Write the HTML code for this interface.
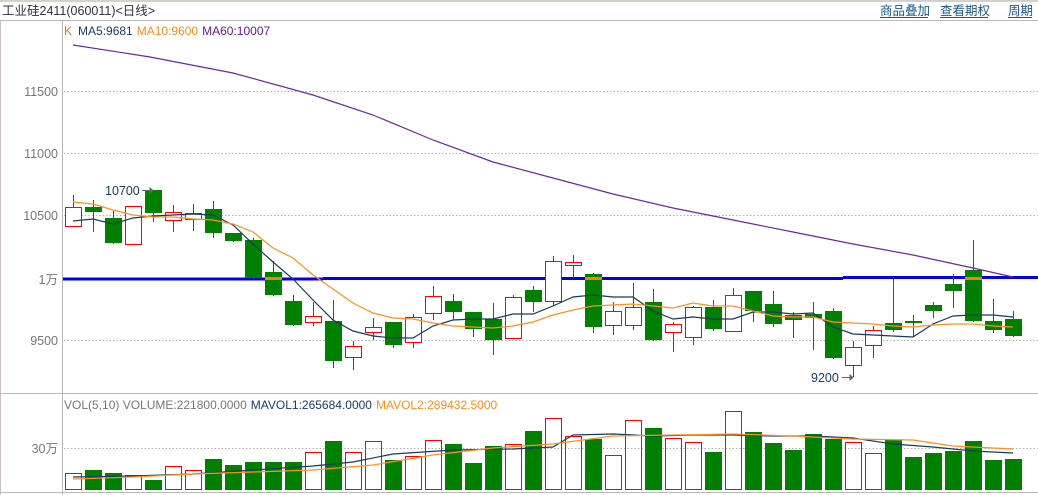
<!DOCTYPE html>
<html><head><meta charset="utf-8"><style>
html,body{margin:0;padding:0;background:#fff;width:1038px;height:495px;overflow:hidden}
svg{display:block}
text{font-family:"Liberation Sans","Noto Sans CJK SC",sans-serif}
rect,line{shape-rendering:crispEdges}
</style></head><body>
<svg id="s" width="1038" height="495" viewBox="0 0 1038 495" xmlns="http://www.w3.org/2000/svg">
<rect x="0" y="0" width="1038" height="495" fill="#fff"/>
<rect x="0" y="0" width="1038" height="2" fill="#d4d0cc"/>
<line x1="0" y1="20.5" x2="1038" y2="20.5" stroke="#b8b8b8"/>
<line x1="0.5" y1="20" x2="0.5" y2="495" stroke="#c8c0c0"/>
<line x1="62.5" y1="20" x2="62.5" y2="495" stroke="#b4b4b4"/>
<line x1="0" y1="393.5" x2="1038" y2="393.5" stroke="#b8b8b8"/>
<line x1="0" y1="492.5" x2="1038" y2="492.5" stroke="#b8b8b8"/>
<text x="2" y="15" font-size="12.5" fill="#333">工业硅2411(060011)&lt;日线&gt;</text>
<g font-size="12.5" fill="#1a5a8a">
<text x="880" y="15">商品叠加</text>
<text x="940" y="15">查看期权</text>
<text x="1008" y="15">周期</text>
</g>
<g stroke="#1a5a8a" stroke-width="1"><line x1="880" y1="17.5" x2="928" y2="17.5"/><line x1="940" y1="17.5" x2="988" y2="17.5"/><line x1="1008" y1="17.5" x2="1032" y2="17.5"/></g>
<g font-size="12.5" fill="#777" text-anchor="end">
<text x="58" y="96">11500</text>
<text x="58" y="158">11000</text>
<text x="58" y="220">10500</text>
<text x="58" y="284">1万</text>
<text x="58" y="345">9500</text>
<text x="58" y="453">30万</text>
</g>
<g stroke="#b0b0b0" stroke-dasharray="1.5,2" stroke-width="1">
<line x1="64" y1="91.5" x2="1038" y2="91.5"/>
<line x1="64" y1="153.5" x2="1038" y2="153.5"/>
<line x1="64" y1="215.5" x2="1038" y2="215.5"/>
<line x1="64" y1="340.5" x2="1038" y2="340.5"/>
<line x1="64" y1="448.5" x2="1038" y2="448.5"/>
</g>
<text x="64" y="35" font-size="12"><tspan fill="#d08020">K</tspan><tspan fill="#1a3a6a" dx="6">MA5:9681</tspan><tspan fill="#ff8c1a" dx="4">MA10:9600</tspan><tspan fill="#6a1a9a" dx="4">MA60:10007</tspan></text>
<text x="64" y="409" font-size="12"><tspan fill="#777">VOL(5,10) VOLUME:221800.0000</tspan><tspan fill="#1a3a6a" dx="4">MAVOL1:265684.0000</tspan><tspan fill="#ff8c1a" dx="4">MAVOL2:289432.5000</tspan></text>
<g id="c"></g>
<g font-size="12.5" fill="#1a3a6a">
<text x="105" y="195">10700</text>
<text x="811" y="382">9200</text>
</g>
<g stroke="#666" fill="#666"><line x1="142" y1="190.5" x2="150" y2="190.5"/><path d="M150 188 L153 190.5 L150 193Z"/>
<line x1="842" y1="377.5" x2="850" y2="377.5"/><path d="M850 375 L853 377.5 L850 380Z"/></g>
</svg>
<script>
var C=[
[1,207,226,195,226],[0,207,212,200,232],[0,218,243,211,244],[1,206,244,206,244],[0,190,213,190,222],[1,212,220,205,232],[1,213,219,204,231],[0,209,233,201,238],[0,233,241,233,242],[0,240,278,238,279],
[0,272,295,261,296],[0,301,325,295,326],[1,316,322,302,326],[0,321,361,300,368],[1,346,357,341,370],[1,327,332,318,340],[0,322,345,322,348],[1,317,342,314,348],[1,296,313,286,320],[0,301,312,294,320],
[0,312,329,312,337],[0,319,340,303,355],[1,297,338,295,339],[0,290,302,286,312],[1,261,301,256,306],[1,262,265,255,278],[0,274,327,273,333],[1,311,325,302,335],[1,307,325,283,330],[0,302,340,289,341],
[1,324,332,322,352],[1,307,337,306,345],[0,307,329,300,331],[1,295,331,288,332],[0,291,311,291,322],[0,304,324,291,327],[0,315,320,312,338],[0,314,318,302,350],[0,311,358,308,359],[1,347,365,341,377],
[1,330,345,326,358],[0,323,330,278,332],[0,321,323,315,337],[0,305,311,302,318],[0,284,291,274,308],[0,270,321,240,322],[0,321,330,299,333],[0,319,336,311,337]];
var V=[[1,473],[0,470],[0,473],[1,475],[0,480],[1,466],[1,470],[0,459],[0,465],[0,462],[0,462],[0,462],[1,452],[0,441],[1,452],[1,441],[0,460],[1,456],[1,440],[0,444],[0,463],[0,446],[1,444],[0,431],[1,418],[1,436],[0,439],[1,455],[1,420],[0,428],[1,438],[1,442],[0,452],[1,411],[0,432],[0,443],[0,450],[0,434],[0,439],[1,442],[1,453],[0,440],[0,457],[0,453],[0,451],[0,441],[0,460],[0,459]];
var ma60=[[73,45],[150,57],[233,73],[313,95],[373,115],[433,140],[493,162],[553,178],[613,194],[673,208],[733,220],[793,232],[853,244],[913,255],[973,268],[1013,277]];
var ma5=[221,219,224,218,216,215,214,215,225,244,262,279,300,320,331,336,338,338,326,320,319,319,314,314,306,297,295,297,297,311,319,317,319,319,312,312,314,313,327,334,335,336,337,324,316,315,315,317];
var ma10=[202,204,210,215,217,217,219,220,224,232,248,258,275,289,303,313,318,319,323,326,327,328,326,322,315,310,306,305,304,306,308,303,306,306,311,316,317,317,322,323,324,326,327,325,324,324,326,327];
var mv1=[[73,477],[133,476],[193,474],[253,470],[313,466],[353,462],[393,454],[453,450],[513,449],[553,447],[573,435],[613,434],[653,436],[693,435],[733,435],[773,436],[813,436],[853,438],[893,444],[933,447],[973,451],[1013,453]];
var mv2=[[73,479],[133,477],[193,474],[253,472],[313,470],[373,465],[433,455],[493,448],[553,444],[613,436],[673,435],[733,434],[793,436],[853,439],[913,440],[953,446],[1013,449]];
var h='';
var R='#ff0000',G='#008000';
h+='<rect x="63" y="277.5" width="260" height="3" fill="#0000ee"/><rect x="323" y="277" width="520" height="3" fill="#0000ee"/><rect x="843" y="276" width="195" height="3" fill="#0000ee"/>';
function hollow(x,y1,y2){var s='';
 s+='<rect x="'+x+'" y="'+y1+'" width="17" height="1" fill="'+R+'"/>';
 s+='<rect x="'+x+'" y="'+y2+'" width="17" height="1" fill="'+R+'"/>';
 s+='<rect x="'+x+'" y="'+y1+'" width="1" height="'+(y2-y1+1)+'" fill="'+R+'"/>';
 s+='<rect x="'+(x+16)+'" y="'+y1+'" width="1" height="'+(y2-y1+1)+'" fill="'+R+'"/>';
 return s;}
C.forEach(function(c,i){var x=65+20*i,cx=x+8;
 if(c[0]){h+='<rect x="'+cx+'" y="'+c[3]+'" width="1" height="'+Math.max(0,c[1]-c[3])+'" fill="'+R+'"/><rect x="'+cx+'" y="'+c[2]+'" width="1" height="'+Math.max(0,c[4]-c[2])+'" fill="'+R+'"/>';
  h+='<rect x="'+x+'" y="'+c[1]+'" width="17" height="'+Math.max(1,c[2]-c[1])+'" fill="#fff"/>'+hollow(x,c[1],c[2]);}
 else{h+='<rect x="'+cx+'" y="'+c[3]+'" width="1" height="'+(c[4]-c[3])+'" fill="'+G+'"/><rect x="'+x+'" y="'+c[1]+'" width="17" height="'+Math.max(2,c[2]-c[1])+'" fill="'+G+'"/>';
  if(c[1]<277&&c[2]>281)h+='<rect x="'+x+'" y="277" width="17" height="3" fill="#ff8000"/>';}
});
function pl(p,col){return '<polyline points="'+p.map(function(a){return a.join(',')}).join(' ')+'" fill="none" stroke="'+col+'" stroke-width="1.2"/>';}
h+=pl(ma60,'#6a2aa0');
h+=pl(ma5.map(function(y,i){return[73+20*i,y]}),'#1a3a5c');
h+=pl(ma10.map(function(y,i){return[73+20*i,y]}),'#ff9020');
V.forEach(function(v,i){var x=65+20*i;
 if(v[0])h+=hollow(x,v[1],489);
 else h+='<rect x="'+x+'" y="'+v[1]+'" width="17" height="'+(490-v[1])+'" fill="'+G+'"/>';});
h+=pl(mv1,'#1a3a5c');h+=pl(mv2,'#ff9020');
document.getElementById('c').innerHTML=h;
</script>
</body></html>
